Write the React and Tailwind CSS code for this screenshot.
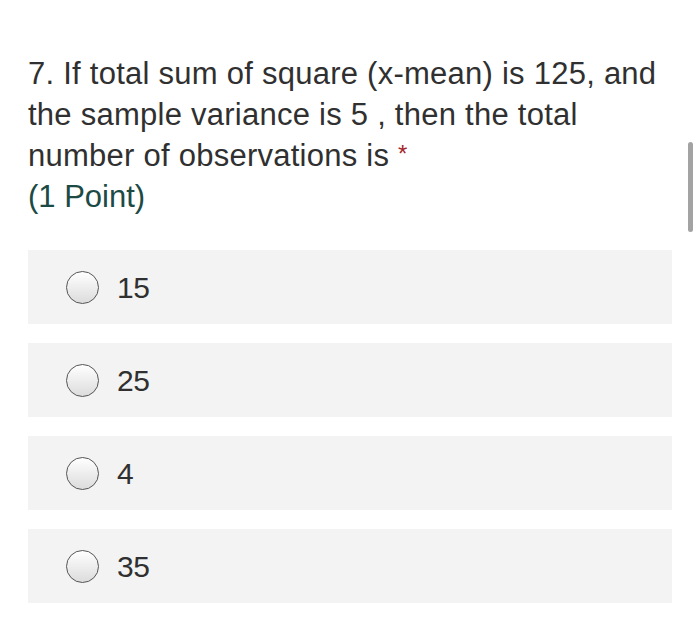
export default function App() {
  const options = ['15', '25', '4', '35'];
  return (
    <div className="relative w-[700px] h-[631px] bg-white overflow-hidden" style={{ fontFamily: '"Liberation Sans", Arial, sans-serif' }}>
      <div className="pt-[53px] pl-[28px] pr-[20px]">
        <div className="text-[31px] leading-[41px] tracking-[0.25px] text-[#303030] whitespace-nowrap">
          7. If total sum of square (x-mean) is 125, and
          <br />
          the sample variance is 5 , then the total
          <br />
          number of observations is{' '}
          <span className="relative -top-[4px] text-[#a4262c] text-[24px] leading-none">*</span>
        </div>
        <div className="text-[31px] leading-[41px] text-[#1c4a45]">(1 Point)</div>
      </div>
      <div className="mt-[33px] ml-[28px] w-[644px] flex flex-col gap-[19px]">
        {options.map((o) => (
          <div key={o} className="h-[74px] bg-[#f3f3f3] flex items-center pl-[38px]">
            <span className="w-[33px] h-[33px] rounded-full border-[1.5px] border-[#555] bg-gradient-to-b from-white to-[#dcdcdc]" />
            <span className="ml-[18px] text-[30px] text-[#303030] tracking-[-0.5px]">{o}</span>
          </div>
        ))}
      </div>
      <div className="absolute left-[688px] top-[142px] w-[5px] h-[90px] rounded-full bg-[#a3a3a3]" />
    </div>
  );
}
